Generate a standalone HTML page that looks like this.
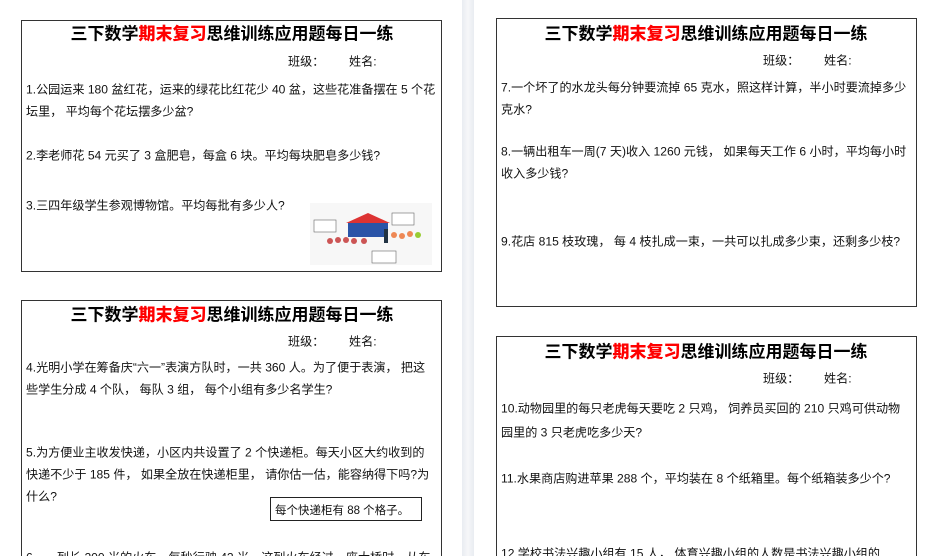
<!DOCTYPE html>
<html><head><meta charset="utf-8"><style>
*{margin:0;padding:0}
html,body{width:932px;height:556px;overflow:hidden}
body{background:#fff;position:relative;font-family:"Liberation Sans","Noto Sans CJK SC",sans-serif;color:#111}
.band{position:absolute;left:462px;top:0;width:12px;height:556px;background:linear-gradient(90deg,#e9ecf1,#f6f7f9,#e9ecf1)}
.box{position:absolute;border:1.3px solid #333;background:#fff}
.t{position:absolute;font-size:17px;font-weight:bold;white-space:nowrap;transform:translate(-50%,-50%);color:#000}
.t b{color:#f00}
.l{position:absolute;font-size:12.1px;white-space:nowrap;transform:translateY(-50%)}
</style></head><body>
<div class="band"></div>
<div class="box" style="left:21px;top:20px;width:419px;height:250px"></div>
<div class="box" style="left:21px;top:300px;width:419px;height:270px"></div>
<div class="box" style="left:496px;top:18px;width:419px;height:287px"></div>
<div class="box" style="left:496px;top:336px;width:419px;height:240px"></div>

<div class="t" style="left:232px;top:32px">三下数学<b>期末复习</b>思维训练应用题每日一练</div>
<div class="l" style="left:288px;top:61px">班级：</div><div class="l" style="left:349px;top:61px">姓名:</div>
<div class="l" style="left:26px;top:89px">1.公园运来 180 盆红花，运来的绿花比红花少 40 盆，这些花准备摆在 5 个花</div>
<div class="l" style="left:26px;top:111px">坛里， 平均每个花坛摆多少盆?</div>
<div class="l" style="left:26px;top:155px">2.李老师花 54 元买了 3 盒肥皂，每盒 6 块。平均每块肥皂多少钱?</div>
<div class="l" style="left:26px;top:205px">3.三四年级学生参观博物馆。平均每批有多少人?</div>
<svg style="position:absolute;left:310px;top:203px" width="122" height="62">
<rect width="122" height="62" fill="#f7f7f7"/>
<rect x="38" y="20" width="40" height="14" fill="#2a54a8"/><polygon points="36,20 58,10 80,20" fill="#d33"/>
<rect x="4" y="17" width="22" height="12" fill="#fff" stroke="#666" stroke-width=".6"/>
<rect x="82" y="10" width="22" height="12" fill="#fff" stroke="#666" stroke-width=".6"/>
<rect x="62" y="48" width="24" height="12" fill="#fff" stroke="#666" stroke-width=".6"/>
<g fill="#c55"><circle cx="20" cy="38" r="3"/><circle cx="28" cy="37" r="3"/><circle cx="36" cy="37" r="3"/><circle cx="44" cy="38" r="3"/><circle cx="54" cy="38" r="3"/></g>
<rect x="74" y="26" width="4" height="14" fill="#234"/>
<g fill="#e85"><circle cx="84" cy="32" r="3"/><circle cx="92" cy="33" r="3"/><circle cx="100" cy="31" r="3"/><circle cx="108" cy="32" r="3" fill="#9c3"/></g>
</svg>

<div class="t" style="left:232px;top:313px">三下数学<b>期末复习</b>思维训练应用题每日一练</div>
<div class="l" style="left:288px;top:341px">班级：</div><div class="l" style="left:349px;top:341px">姓名:</div>
<div class="l" style="left:26px;top:367px">4.光明小学在筹备庆“六一”表演方队时，一共 360 人。为了便于表演， 把这</div>
<div class="l" style="left:26px;top:389px">些学生分成 4 个队， 每队 3 组， 每个小组有多少名学生?</div>
<div class="l" style="left:26px;top:452px">5.为方便业主收发快递，小区内共设置了 2 个快递柜。每天小区大约收到的</div>
<div class="l" style="left:26px;top:474px">快递不少于 185 件， 如果全放在快递柜里， 请你估一估，能容纳得下吗?为</div>
<div class="l" style="left:26px;top:496px">什么?</div>
<div style="position:absolute;left:270px;top:497px;width:150px;height:22px;border:1.2px solid #222"></div>
<div class="l" style="left:275px;top:510px;font-size:11.5px">每个快递柜有 88 个格子。</div>
<div class="l" style="left:26px;top:557px">6．一列长 200 米的火车，每秒行驶 42 米，这列火车经过一座大桥时，从车</div>

<div class="t" style="left:706px;top:32px">三下数学<b>期末复习</b>思维训练应用题每日一练</div>
<div class="l" style="left:763px;top:60px">班级：</div><div class="l" style="left:824px;top:60px">姓名:</div>
<div class="l" style="left:501px;top:87px">7.一个坏了的水龙头每分钟要流掉 65 克水，照这样计算，半小时要流掉多少</div>
<div class="l" style="left:501px;top:109px">克水?</div>
<div class="l" style="left:501px;top:151px">8.一辆出租车一周(7 天)收入 1260 元钱， 如果每天工作 6 小时，平均每小时</div>
<div class="l" style="left:501px;top:173px">收入多少钱?</div>
<div class="l" style="left:501px;top:241px">9.花店 815 枝玫瑰， 每 4 枝扎成一束，一共可以扎成多少束，还剩多少枝?</div>

<div class="t" style="left:706px;top:350px">三下数学<b>期末复习</b>思维训练应用题每日一练</div>
<div class="l" style="left:763px;top:378px">班级：</div><div class="l" style="left:824px;top:378px">姓名:</div>
<div class="l" style="left:501px;top:408px">10.动物园里的每只老虎每天要吃 2 只鸡， 饲养员买回的 210 只鸡可供动物</div>
<div class="l" style="left:501px;top:432px">园里的 3 只老虎吃多少天?</div>
<div class="l" style="left:501px;top:478px">11.水果商店购进苹果 288 个，平均装在 8 个纸箱里。每个纸箱装多少个?</div>
<div class="l" style="left:501px;top:553px">12.学校书法兴趣小组有 15 人， 体育兴趣小组的人数是书法兴趣小组的</div>
</body></html>
